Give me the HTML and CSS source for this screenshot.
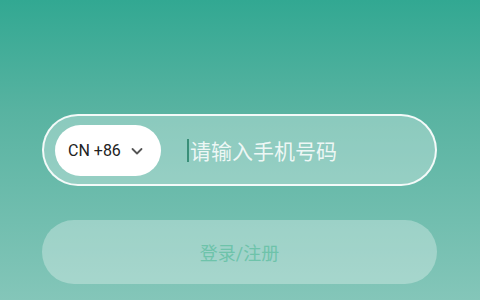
FILE: index.html
```html
<!DOCTYPE html>
<html lang="zh-CN">
<head>
    <meta charset="UTF-8">
    <meta name="viewport" content="width=device-width, initial-scale=1.0">
    <title>登录</title>
    <link rel="stylesheet" href="styles.css">
</head>
<body>
    <div class="container">
        <div class="phone-field">
            <div class="country-picker">
                <span class="country-code">CN +86</span>
                <svg class="chevron" width="14" height="14" viewBox="0 0 14 14">
                    <path d="M2.5 5 L7 9.5 L11.5 5" fill="none" stroke="#555" stroke-width="1.8" stroke-linecap="round" stroke-linejoin="round"/>
                </svg>
            </div>
            <div class="phone-input">
                <span class="caret"></span>
                <span class="placeholder">请输入手机号码</span>
            </div>
        </div>

        <button class="submit-button">登录/注册</button>
    </div>
</body>
</html>
```

FILE: styles.css
```css
:root {
    --bg-top: #32a892;
    --bg-mid: #58b3a1;
    --bg-bottom: #84c6b9;
    --field-bg: rgba(255, 255, 255, 0.3);
    --button-bg: rgba(255, 255, 255, 0.3);
    --button-text: #6ec3aa;
    --caret-color: #3a8f79;
}

* {
    margin: 0;
    padding: 0;
    box-sizing: border-box;
    font-family: Roboto, "Noto Sans CJK SC", sans-serif;
}

body {
    width: 480px;
    height: 300px;
    overflow: hidden;
    background: linear-gradient(to bottom, var(--bg-top) 0%, var(--bg-mid) 37%, var(--bg-bottom) 100%);
}

.container {
    display: flex;
    flex-direction: column;
    gap: 34px;
    padding: 114px 43px 0 42px;
}

.phone-field {
    display: flex;
    align-items: center;
    height: 72px;
    padding: 0 11px;
    border: 2px solid rgba(255, 255, 255, 0.9);
    border-radius: 36px;
    background-color: var(--field-bg);
}

.country-picker {
    display: flex;
    align-items: center;
    gap: 9px;
    width: 106px;
    height: 51px;
    padding-left: 13px;
    border-radius: 26px;
    background-color: #ffffff;
}

.country-code {
    font-size: 16px;
    color: #222222;
}

.chevron {
    margin-top: 1px;
}

.phone-input {
    display: flex;
    align-items: center;
    margin-left: 26px;
}

.caret {
    width: 2px;
    height: 23px;
    background-color: var(--caret-color);
    margin-right: 1px;
}

.placeholder {
    font-size: 21px;
    color: rgba(255, 255, 255, 0.85);
}

.submit-button {
    height: 64px;
    border: none;
    border-radius: 32px;
    background-color: var(--button-bg);
    color: var(--button-text);
    font-size: 18px;
}
```
